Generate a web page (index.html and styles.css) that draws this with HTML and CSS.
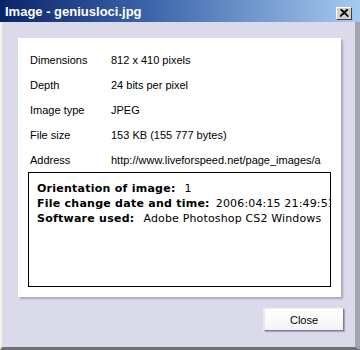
FILE: index.html
```html
<!DOCTYPE html>
<html>
<head>
<meta charset="utf-8">
<link rel="stylesheet" href="styles.css">
</head>
<body>
<div class="window">
  <div class="titlebar">
    <span class="title">Image - geniusloci.jpg</span>
    <span class="tclose">
      <svg width="9" height="8" viewBox="0 0 9 8"><path d="M0.5 0.5 L8 7.5 M8 0.5 L0.5 7.5 M1.5 0.5 L8.5 7.5 M7 0.5 L-0.5 7.5" stroke="#000" stroke-width="1.2" fill="none"/></svg>
    </span>
  </div>
  <div class="content">
    <div class="panel">
      <div class="props">
        <div class="lbl">Dimensions</div><div class="val">812 x 410 pixels</div>
        <div class="lbl">Depth</div><div class="val">24 bits per pixel</div>
        <div class="lbl">Image type</div><div class="val">JPEG</div>
        <div class="lbl">File size</div><div class="val">153 KB (155 777 bytes)</div>
        <div class="lbl">Address</div><div class="val">http://www.liveforspeed.net/page_images/a</div>
      </div>
      <div class="exif">
        <div class="line"><b class="key">Orientation of image:</b><span class="v v1">1</span></div>
        <div class="line"><b class="key">File change date and time:</b><span class="v v2">2006:04:15 21:49:51</span></div>
        <div class="line"><b class="key">Software used:</b><span class="v">Adobe Photoshop CS2 Windows</span></div>
      </div>
    </div>
  </div>
  <div class="footer">
    <button class="btn">Close</button>
  </div>
</div>
</body>
</html>
```
FILE: styles.css
```css
html, body {
  margin: 0;
  padding: 0;
  background: #dadaea;
}
.window {
  width: 360px;
  height: 350px;
  box-sizing: border-box;
  background: #dadaea;
  display: flex;
  flex-direction: column;
  border-left: 2px solid #f4f4ec;
  border-right: 5px solid #a4a4b0;
  border-bottom: 3px solid #707078;
  font-family: "Liberation Sans", Arial, sans-serif;
}
.titlebar {
  height: 22px;
  margin-left: -2px;
  margin-right: -5px;
  background: linear-gradient(to right, #0a246a 0%, #3a62a8 40%, #a6caf0 100%);
  display: flex;
  align-items: center;
  padding: 0 8px 0 5px;
  flex: none;
}
.title {
  color: #fff;
  font-weight: bold;
  font-size: 13px;
  font-family: "Liberation Sans", Arial, sans-serif;
}
.tclose {
  margin-left: auto;
  margin-top: 4px;
  width: 16px;
  height: 13px;
  box-sizing: border-box;
  background: #d4d0c8;
  border: 1px solid;
  border-color: #fff #404040 #404040 #fff;
  display: flex;
  align-items: center;
  justify-content: center;
}
.content {
  padding: 16px 0 0 16px;
  flex: none;
}
.panel {
  width: 323px;
  height: 259px;
  box-sizing: border-box;
  background: #fff;
  box-shadow: 2px 2px 2px #a8a8b8;
  padding: 9px 0 0 12px;
}
.props {
  display: grid;
  grid-template-columns: 81px 218px;
  grid-auto-rows: 25px;
  align-items: center;
  font-size: 11px;
  color: #000;
}
.val {
  white-space: nowrap;
  overflow: hidden;
}
.exif {
  margin-left: -2px;
  width: 303px;
  height: 115px;
  box-sizing: border-box;
  border: 1px solid #000;
  overflow: hidden;
  padding: 8px 0 0 8px;
  font-family: "DejaVu Sans", Verdana, sans-serif;
  font-size: 11px;
  line-height: 15px;
  color: #000;
}
.line {
  white-space: nowrap;
}
.key {
  letter-spacing: 0.25px;
}
.v {
  margin-left: 9px;
  letter-spacing: 0.15px;
}
.v2 {
  margin-left: 6px;
  letter-spacing: 0.15px;
}
.footer {
  display: flex;
  justify-content: flex-end;
  padding: 11px 11px 0 0;
}
.btn {
  width: 80px;
  height: 23px;
  box-sizing: border-box;
  background: linear-gradient(#ffffff, #f4f4f8);
  border: 1px solid;
  border-color: #f0f0f8 #7c7c94 #7c7c94 #e8e8f4;
  box-shadow: 1px 1px 1px #a8a8bc, -1px 0 1px #e8e8f8;
  font-family: "Liberation Sans", Arial, sans-serif;
  font-size: 11px;
  color: #000;
  padding: 0;
}
```
